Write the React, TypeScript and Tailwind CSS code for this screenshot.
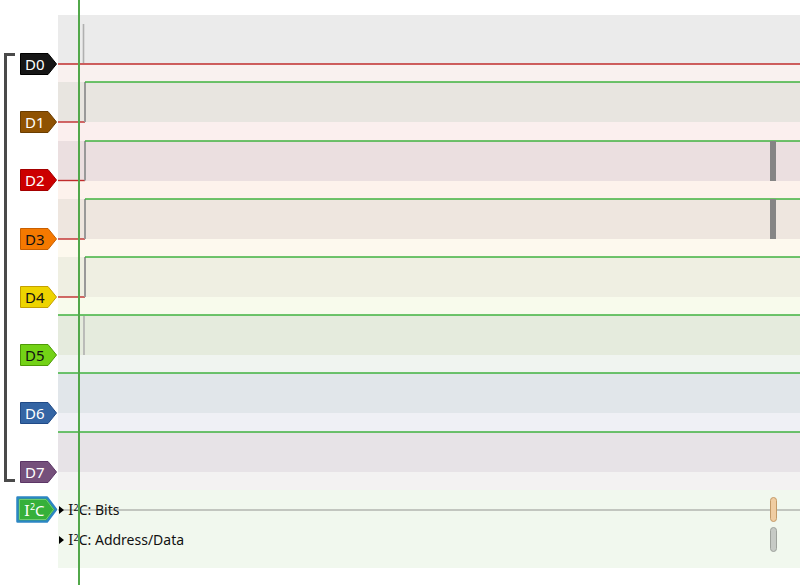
import React from "react";

type Ch = { name: string; fill: string; stroke: string; text: string; dark: string; light: string; darkH: string; lightH: string; pt: string };

const channels: Ch[] = [
  { name: "D0", fill: "#161616", stroke: "#000000", text: "#ffffff", dark: "bg-[#ebebeb]", light: "bg-[#f9f1ef]", darkH: "h-[49px]", lightH: "h-[18px]", pt: "pt-[38px]" },
  { name: "D1", fill: "#8f5202", stroke: "#6b3d00", text: "#ffffff", dark: "bg-[#e8e5e0]", light: "bg-[#fbefee]", darkH: "h-[40px]", lightH: "h-[19px]", pt: "pt-[29px]" },
  { name: "D2", fill: "#cc0000", stroke: "#a40000", text: "#ffffff", dark: "bg-[#ebdfe0]", light: "bg-[#fdf2ec]", darkH: "h-[40px]", lightH: "h-[18px]", pt: "pt-[28px]" },
  { name: "D3", fill: "#f57900", stroke: "#c85f00", text: "#111111", dark: "bg-[#eee6df]", light: "bg-[#fdf9ee]", darkH: "h-[40px]", lightH: "h-[18px]", pt: "pt-[29px]" },
  { name: "D4", fill: "#edd400", stroke: "#c4a000", text: "#111111", dark: "bg-[#efefe2]", light: "bg-[#f8fbec]", darkH: "h-[40px]", lightH: "h-[18px]", pt: "pt-[29px]" },
  { name: "D5", fill: "#73d216", stroke: "#4e9a06", text: "#111111", dark: "bg-[#e5ebdd]", light: "bg-[#f0f4f0]", darkH: "h-[40px]", lightH: "h-[18px]", pt: "pt-[29px]" },
  { name: "D6", fill: "#3465a4", stroke: "#204a87", text: "#ffffff", dark: "bg-[#e1e6ea]", light: "bg-[#eff0f5]", darkH: "h-[40px]", lightH: "h-[19px]", pt: "pt-[29px]" },
  { name: "D7", fill: "#75507b", stroke: "#5c3566", text: "#ffffff", dark: "bg-[#e7e3e7]", light: "bg-[#f3f2f2]", darkH: "h-[40px]", lightH: "h-[18px]", pt: "pt-[29px]" },
];

function Label({ ch }: { ch: Ch }) {
  return (
    <svg width="38" height="22" className="ml-[20px] block">
      <polygon points="0.5,0.5 28,0.5 36.5,11 28,21.5 0.5,21.5" fill={ch.fill} stroke={ch.stroke} strokeWidth="1" strokeLinejoin="round" />
      <text x="5" y="16.5" fontSize="15" fill={ch.text} fontFamily="Noto Sans, sans-serif">{ch.name}</text>
    </svg>
  );
}

function I2CLabel() {
  return (
    <svg width="42" height="28" className="ml-[16px] block">
      <polygon points="1.5,1.5 31,1.5 40,13.5 31,25.5 1.5,25.5" fill="#36b03a" stroke="#2c86c4" strokeWidth="2.5" strokeLinejoin="round" />
      <polygon points="3.5,3.5 30,3.5 37.5,13.5 30,23.5 3.5,23.5" fill="none" stroke="#7fd37f" strokeWidth="0.8" strokeLinejoin="round" />
      <text x="8" y="19.5" fontSize="15" fill="#ffffff" fontFamily="Noto Sans, sans-serif">
        <tspan fontFamily="DejaVu Serif, serif">I</tspan>
        <tspan fontSize="9" dy="-6">2</tspan>
        <tspan dy="6">C</tspan>
      </text>
    </svg>
  );
}

function DecoderRow({ label }: { label: string }) {
  return (
    <div className="flex items-center h-[20px]">
      <div className="ml-[1px] w-0 h-0 border-y-[4px] border-y-transparent border-l-[5px] border-l-black" />
      <span className="ml-[4px] text-[14px] text-[#111111] leading-none">
        <span style={{ fontFamily: "'DejaVu Serif', serif" }}>I</span>
        <sup className="text-[9px] -top-[0.45em]">2</sup>C: {label}
      </span>
    </div>
  );
}

export default function App() {
  const red = "#c02c2c";
  const green = "#3fb23f";
  const edge = "#999999";
  return (
    <div className="relative w-[800px] h-[585px] bg-white overflow-hidden" style={{ fontFamily: "'Noto Sans', sans-serif" }}>
      <div className="flex flex-col pt-[15px]">
        {channels.map((ch) => (
          <div key={ch.name} className="flex">
            <div className={`w-[58px] shrink-0 ${ch.pt}`}>
              <Label ch={ch} />
            </div>
            <div className="flex-1 flex flex-col">
              <div className={`${ch.darkH} ${ch.dark}`} />
              <div className={`${ch.lightH} ${ch.light}`} />
            </div>
          </div>
        ))}
        <div className="flex h-[78px]">
          <div className="w-[58px] shrink-0 pt-[6px]">
            <I2CLabel />
          </div>
          <div className="flex-1 bg-[#f1f8ee] relative flex flex-col pt-[10px] gap-[10px]">
            <div className="absolute left-0 right-0 top-[19px] h-[1.5px] bg-[#c2c6bf]" />
            <div className="relative">
              <DecoderRow label="Bits" />
            </div>
            <div className="relative">
              <DecoderRow label="Address/Data" />
            </div>
          </div>
        </div>
      </div>

      <div className="absolute left-[4px] top-[53px] w-[11px] h-[429px] border-l-[3px] border-y-[3px] border-[#4a4a4a]" />

      <svg className="absolute inset-0 pointer-events-none" width="800" height="585">
        <line x1="58" y1="64" x2="800" y2="64" stroke={red} strokeWidth="1.4" />
        <line x1="83.5" y1="24" x2="83.5" y2="63" stroke="#b0b0b0" strokeWidth="1.6" />
        {[
          [82, 122],
          [141, 180.5],
          [199, 239],
          [257, 297],
        ].map(([hi, lo], i) => (
          <g key={i}>
            <line x1="58" y1={lo} x2="85" y2={lo} stroke={red} strokeWidth="1.4" />
            <line x1="85" y1={hi} x2="85" y2={lo} stroke={edge} strokeWidth="2" />
            <line x1="85" y1={hi} x2="800" y2={hi} stroke={green} strokeWidth="1.5" />
          </g>
        ))}
        <rect x="770" y="141" width="6" height="40" fill="#858585" />
        <rect x="770" y="199" width="6" height="40" fill="#858585" />
        <line x1="58" y1="315" x2="800" y2="315" stroke={green} strokeWidth="1.5" />
        <line x1="84" y1="316" x2="84" y2="355" stroke="#b0b0b0" strokeWidth="1.6" />
        <line x1="58" y1="373" x2="800" y2="373" stroke={green} strokeWidth="1.5" />
        <line x1="58" y1="432" x2="800" y2="432" stroke={green} strokeWidth="1.5" />
        <rect x="770.5" y="497.5" width="6" height="24" rx="3" fill="#f0cda2" stroke="#c39a68" strokeWidth="1" />
        <rect x="770.5" y="527.5" width="6" height="24" rx="3" fill="#c6cac5" stroke="#9ea29c" strokeWidth="1" />
      </svg>

      <div className="absolute left-[78px] top-0 w-[2px] h-full bg-[#52a84a]" />
    </div>
  );
}
